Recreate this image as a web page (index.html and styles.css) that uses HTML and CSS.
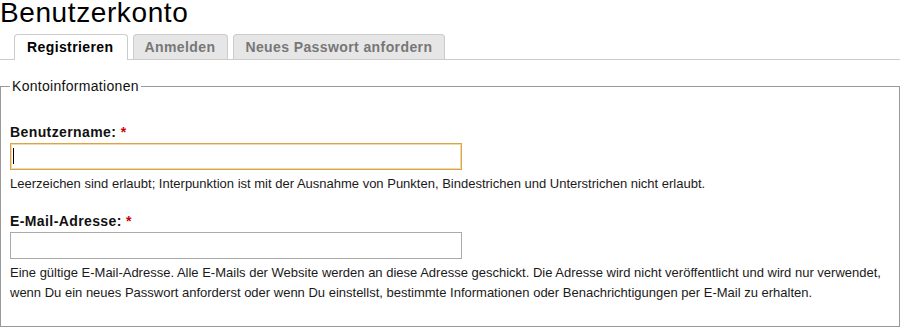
FILE: index.html
```html
<!DOCTYPE html>
<html lang="de">
<head>
    <meta charset="UTF-8">
    <meta name="viewport" content="width=device-width, initial-scale=1.0">
    <title>Benutzerkonto</title>
    <link rel="stylesheet" href="styles.css">
</head>
<body>
    <h1>Benutzerkonto</h1>
    <ul class="tabs">
        <li><a href="#" class="active">Registrieren</a></li>
        <li><a href="#">Anmelden</a></li>
        <li><a href="#">Neues Passwort anfordern</a></li>
    </ul>

    <form id="registerForm" action="#">
        <fieldset>
            <legend>Kontoinformationen</legend>

            <div class="form-item first">
                <label for="name">Benutzername: <span class="required">*</span></label>
                <div class="input-wrap">
                    <input type="text" id="name" name="name" class="focused">
                    <span class="caret"></span>
                </div>
                <div class="description">Leerzeichen sind erlaubt; Interpunktion ist mit der Ausnahme von Punkten, Bindestrichen und Unterstrichen nicht erlaubt.</div>
            </div>

            <div class="form-item">
                <label for="mail">E-Mail-Adresse: <span class="required">*</span></label>
                <div class="input-wrap">
                    <input type="text" id="mail" name="mail">
                </div>
                <div class="description">Eine gültige E-Mail-Adresse. Alle E-Mails der Website werden an diese Adresse geschickt. Die Adresse wird nicht veröffentlicht und wird nur verwendet, wenn Du ein neues Passwort anforderst oder wenn Du einstellst, bestimmte Informationen oder Benachrichtigungen per E-Mail zu erhalten.</div>
            </div>
        </fieldset>
    </form>
</body>
</html>
```

FILE: styles.css
```css
body {
    margin: 0;
    font-family: 'Liberation Sans', Arial, Helvetica, sans-serif;
    color: #000;
    background-color: #fff;
}
h1 {
    margin: 0;
    font-size: 28px;
    font-weight: normal;
    letter-spacing: 0.6px;
    line-height: 25px;
}
.tabs {
    display: flex;
    align-items: flex-end;
    gap: 5px;
    list-style: none;
    margin: 9px 0 0 0;
    padding: 0 0 0 14px;
    border-bottom: 1px solid #cccccc;
}
.tabs a {
    display: block;
    padding: 0 12px 0 11px;
    border: 1px solid #cccccc;
    border-bottom: none;
    border-radius: 4px 4px 0 0;
    background-color: #e6e6e6;
    color: #777;
    font-size: 14px;
    font-weight: bold;
    letter-spacing: 0.4px;
    line-height: 24px;
    text-decoration: none;
}
.tabs a.active {
    /* deckt die Linie unter dem aktiven Reiter ab */
    padding: 0 13px 1px 12px;
    margin-bottom: -1px;
    background-color: #fff;
    color: #000;
}
fieldset {
    margin: 18px 0 0 0;
    padding: 0 0 23px 9px;
    border: 1px solid #999;
    min-width: 0;
}
legend {
    padding: 0 2px;
    font-size: 14px;
    letter-spacing: 0.3px;
    line-height: 16px;
    color: #111;
}
.form-item {
    margin-top: 19px;
}
.form-item.first {
    margin-top: 30px;
}
label {
    display: block;
    font-size: 14px;
    font-weight: bold;
    letter-spacing: 0.4px;
    line-height: 16px;
    margin-bottom: 3px;
    color: #111;
}
.required {
    color: #cc0000;
}
.input-wrap {
    position: relative;
    width: 452px;
}
input[type="text"] {
    display: block;
    width: 452px;
    height: 27px;
    margin: 0;
    padding: 2px 4px;
    border: 1px solid #aaaaaa;
    box-sizing: border-box;
    font-family: inherit;
    font-size: 13px;
    outline: none;
}
input.focused {
    border-color: #d9a54c;
    box-shadow: inset 0 0 0 1px #f1d9a8;
}
.caret {
    position: absolute;
    left: 3px;
    top: 5px;
    width: 1px;
    height: 16px;
    background-color: #000;
}
.description {
    margin-top: 4px;
    font-size: 13px;
    line-height: 20px;
    color: #1a1a1a;
}
```
